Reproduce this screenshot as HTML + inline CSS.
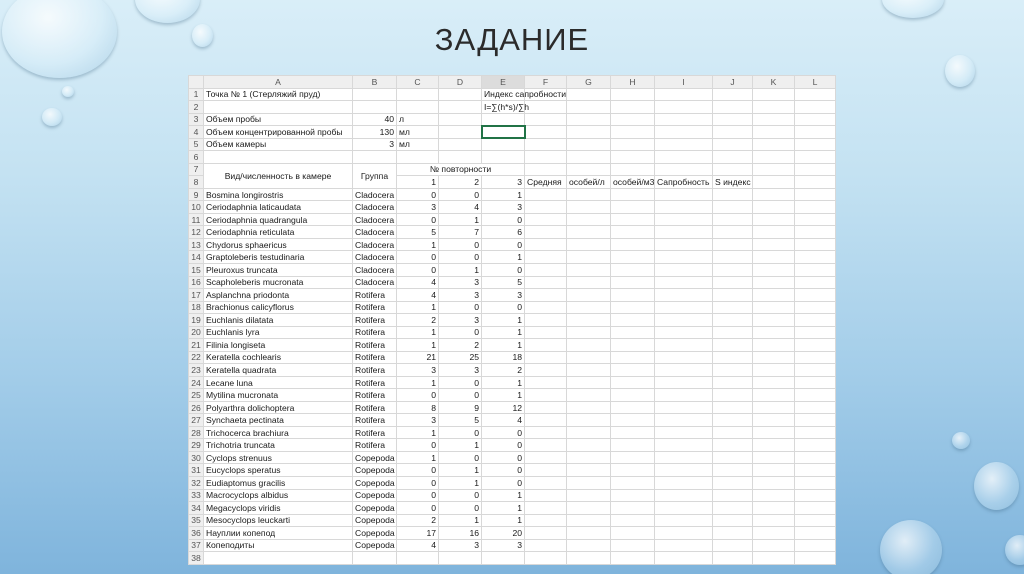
<!DOCTYPE html>
<html><head><meta charset="utf-8"><style>
html,body{margin:0;padding:0;width:1024px;height:574px;overflow:hidden}
html{background:#7fb4dc}
body{position:relative;background:linear-gradient(180deg,#d9eef8 0%,#c4e2f2 30%,#a3cde9 65%,#7fb4dc 100%);font-family:"Liberation Sans",sans-serif}
.drop{position:absolute;border-radius:50%;background:radial-gradient(ellipse at 40% 35%,rgba(255,255,255,.75),rgba(220,240,250,.35) 55%,rgba(160,200,225,.5) 90%,rgba(255,255,255,.9) 100%);box-shadow:0 2px 3px rgba(60,100,130,.35)}
h1{position:absolute;left:0;width:1024px;top:22px;margin:0;text-align:center;font-weight:normal;font-size:31px;letter-spacing:1px;color:#2b2b2b}
table{position:absolute;left:188px;top:75px;width:647px;height:490px;border-collapse:collapse;table-layout:fixed;background:#fff;font-family:"Liberation Sans","Noto Sans CJK SC",sans-serif;font-size:8.6px;color:#1a1a1a}
td{border:1px solid #d8d8d8;padding:0 2px;white-space:nowrap;overflow:visible;line-height:10px}
tr.h td{background:#efefef;text-align:center;color:#555}
td.n{background:#efefef;text-align:center;color:#555;padding:0}
.r{text-align:right}.c{text-align:center}
</style></head><body>
<div class="drop" style="left:2px;top:-15px;width:115px;height:93px"></div>
<div class="drop" style="left:135px;top:-25px;width:65px;height:48px"></div>
<div class="drop" style="left:192px;top:24px;width:21px;height:23px"></div>
<div class="drop" style="left:62px;top:86px;width:12px;height:11px"></div>
<div class="drop" style="left:42px;top:108px;width:20px;height:18px"></div>
<div class="drop" style="left:882px;top:-20px;width:62px;height:38px"></div>
<div class="drop" style="left:945px;top:55px;width:30px;height:32px"></div>
<div class="drop" style="left:952px;top:432px;width:18px;height:17px"></div>
<div class="drop" style="left:974px;top:462px;width:45px;height:48px"></div>
<div class="drop" style="left:880px;top:520px;width:62px;height:60px"></div>
<div class="drop" style="left:1005px;top:535px;width:30px;height:30px"></div>
<h1>ЗАДАНИЕ</h1>
<table>
<colgroup><col style="width:15px"><col style="width:149px"><col style="width:44px"><col style="width:42px"><col style="width:43px"><col style="width:43px"><col style="width:42px"><col style="width:44px"><col style="width:44px"><col style="width:58px"><col style="width:40px"><col style="width:42px"><col style="width:41px"></colgroup>
<tr class="h"><td></td><td>A</td><td>B</td><td>C</td><td>D</td><td style="background:#dcdcdc">E</td><td>F</td><td>G</td><td>H</td><td>I</td><td>J</td><td>K</td><td>L</td></tr>
<tr><td class="n">1</td><td>Точка № 1 (Стерляжий пруд)</td><td></td><td></td><td></td><td>Индекс сапробности</td><td></td><td></td><td></td><td></td><td></td><td></td><td></td></tr>
<tr><td class="n">2</td><td></td><td></td><td></td><td></td><td>I=∑(h*s)/∑h</td><td></td><td></td><td></td><td></td><td></td><td></td><td></td></tr>
<tr><td class="n">3</td><td>Объем пробы</td><td class="r">40</td><td>л</td><td></td><td></td><td></td><td></td><td></td><td></td><td></td><td></td><td></td></tr>
<tr><td class="n">4</td><td>Объем концентрированной пробы</td><td class="r">130</td><td>мл</td><td></td><td style="border:2px solid #217346"></td><td></td><td></td><td></td><td></td><td></td><td></td><td></td></tr>
<tr><td class="n">5</td><td>Объем камеры</td><td class="r">3</td><td>мл</td><td></td><td></td><td></td><td></td><td></td><td></td><td></td><td></td><td></td></tr>
<tr><td class="n">6</td><td></td><td></td><td></td><td></td><td></td><td></td><td></td><td></td><td></td><td></td><td></td><td></td></tr>
<tr><td class="n">7</td><td rowspan="2" class="c">Вид/численность в камере</td><td rowspan="2" class="c">Группа</td><td colspan="3" class="c">№ повторности</td><td></td><td></td><td></td><td></td><td></td><td></td><td></td></tr>
<tr><td class="n">8</td><td class="r">1</td><td class="r">2</td><td class="r">3</td><td>Средняя</td><td>особей/л</td><td>особей/м3</td><td>Сапробность</td><td>S индекс</td><td></td><td></td></tr>
<tr><td class="n">9</td><td>Bosmina longirostris</td><td>Cladocera</td><td class="r">0</td><td class="r">0</td><td class="r">1</td><td></td><td></td><td></td><td></td><td></td><td></td><td></td></tr>
<tr><td class="n">10</td><td>Ceriodaphnia laticaudata</td><td>Cladocera</td><td class="r">3</td><td class="r">4</td><td class="r">3</td><td></td><td></td><td></td><td></td><td></td><td></td><td></td></tr>
<tr><td class="n">11</td><td>Ceriodaphnia quadrangula</td><td>Cladocera</td><td class="r">0</td><td class="r">1</td><td class="r">0</td><td></td><td></td><td></td><td></td><td></td><td></td><td></td></tr>
<tr><td class="n">12</td><td>Ceriodaphnia reticulata</td><td>Cladocera</td><td class="r">5</td><td class="r">7</td><td class="r">6</td><td></td><td></td><td></td><td></td><td></td><td></td><td></td></tr>
<tr><td class="n">13</td><td>Chydorus sphaericus</td><td>Cladocera</td><td class="r">1</td><td class="r">0</td><td class="r">0</td><td></td><td></td><td></td><td></td><td></td><td></td><td></td></tr>
<tr><td class="n">14</td><td>Graptoleberis testudinaria</td><td>Cladocera</td><td class="r">0</td><td class="r">0</td><td class="r">1</td><td></td><td></td><td></td><td></td><td></td><td></td><td></td></tr>
<tr><td class="n">15</td><td>Pleuroxus truncata</td><td>Cladocera</td><td class="r">0</td><td class="r">1</td><td class="r">0</td><td></td><td></td><td></td><td></td><td></td><td></td><td></td></tr>
<tr><td class="n">16</td><td>Scapholeberis mucronata</td><td>Cladocera</td><td class="r">4</td><td class="r">3</td><td class="r">5</td><td></td><td></td><td></td><td></td><td></td><td></td><td></td></tr>
<tr><td class="n">17</td><td>Asplanchna priodonta</td><td>Rotifera</td><td class="r">4</td><td class="r">3</td><td class="r">3</td><td></td><td></td><td></td><td></td><td></td><td></td><td></td></tr>
<tr><td class="n">18</td><td>Brachionus calicyflorus</td><td>Rotifera</td><td class="r">1</td><td class="r">0</td><td class="r">0</td><td></td><td></td><td></td><td></td><td></td><td></td><td></td></tr>
<tr><td class="n">19</td><td>Euchlanis dilatata</td><td>Rotifera</td><td class="r">2</td><td class="r">3</td><td class="r">1</td><td></td><td></td><td></td><td></td><td></td><td></td><td></td></tr>
<tr><td class="n">20</td><td>Euchlanis lyra</td><td>Rotifera</td><td class="r">1</td><td class="r">0</td><td class="r">1</td><td></td><td></td><td></td><td></td><td></td><td></td><td></td></tr>
<tr><td class="n">21</td><td>Filinia longiseta</td><td>Rotifera</td><td class="r">1</td><td class="r">2</td><td class="r">1</td><td></td><td></td><td></td><td></td><td></td><td></td><td></td></tr>
<tr><td class="n">22</td><td>Keratella cochlearis</td><td>Rotifera</td><td class="r">21</td><td class="r">25</td><td class="r">18</td><td></td><td></td><td></td><td></td><td></td><td></td><td></td></tr>
<tr><td class="n">23</td><td>Keratella quadrata</td><td>Rotifera</td><td class="r">3</td><td class="r">3</td><td class="r">2</td><td></td><td></td><td></td><td></td><td></td><td></td><td></td></tr>
<tr><td class="n">24</td><td>Lecane luna</td><td>Rotifera</td><td class="r">1</td><td class="r">0</td><td class="r">1</td><td></td><td></td><td></td><td></td><td></td><td></td><td></td></tr>
<tr><td class="n">25</td><td>Mytilina mucronata</td><td>Rotifera</td><td class="r">0</td><td class="r">0</td><td class="r">1</td><td></td><td></td><td></td><td></td><td></td><td></td><td></td></tr>
<tr><td class="n">26</td><td>Polyarthra dolichoptera</td><td>Rotifera</td><td class="r">8</td><td class="r">9</td><td class="r">12</td><td></td><td></td><td></td><td></td><td></td><td></td><td></td></tr>
<tr><td class="n">27</td><td>Synchaeta pectinata</td><td>Rotifera</td><td class="r">3</td><td class="r">5</td><td class="r">4</td><td></td><td></td><td></td><td></td><td></td><td></td><td></td></tr>
<tr><td class="n">28</td><td>Trichocerca brachiura</td><td>Rotifera</td><td class="r">1</td><td class="r">0</td><td class="r">0</td><td></td><td></td><td></td><td></td><td></td><td></td><td></td></tr>
<tr><td class="n">29</td><td>Trichotria truncata</td><td>Rotifera</td><td class="r">0</td><td class="r">1</td><td class="r">0</td><td></td><td></td><td></td><td></td><td></td><td></td><td></td></tr>
<tr><td class="n">30</td><td>Cyclops strenuus</td><td>Copepoda</td><td class="r">1</td><td class="r">0</td><td class="r">0</td><td></td><td></td><td></td><td></td><td></td><td></td><td></td></tr>
<tr><td class="n">31</td><td>Eucyclops speratus</td><td>Copepoda</td><td class="r">0</td><td class="r">1</td><td class="r">0</td><td></td><td></td><td></td><td></td><td></td><td></td><td></td></tr>
<tr><td class="n">32</td><td>Eudiaptomus gracilis</td><td>Copepoda</td><td class="r">0</td><td class="r">1</td><td class="r">0</td><td></td><td></td><td></td><td></td><td></td><td></td><td></td></tr>
<tr><td class="n">33</td><td>Macrocyclops albidus</td><td>Copepoda</td><td class="r">0</td><td class="r">0</td><td class="r">1</td><td></td><td></td><td></td><td></td><td></td><td></td><td></td></tr>
<tr><td class="n">34</td><td>Megacyclops viridis</td><td>Copepoda</td><td class="r">0</td><td class="r">0</td><td class="r">1</td><td></td><td></td><td></td><td></td><td></td><td></td><td></td></tr>
<tr><td class="n">35</td><td>Mesocyclops leuckarti</td><td>Copepoda</td><td class="r">2</td><td class="r">1</td><td class="r">1</td><td></td><td></td><td></td><td></td><td></td><td></td><td></td></tr>
<tr><td class="n">36</td><td>Науплии копепод</td><td>Copepoda</td><td class="r">17</td><td class="r">16</td><td class="r">20</td><td></td><td></td><td></td><td></td><td></td><td></td><td></td></tr>
<tr><td class="n">37</td><td>Копеподиты</td><td>Copepoda</td><td class="r">4</td><td class="r">3</td><td class="r">3</td><td></td><td></td><td></td><td></td><td></td><td></td><td></td></tr>
<tr><td class="n">38</td><td></td><td></td><td></td><td></td><td></td><td></td><td></td><td></td><td></td><td></td><td></td><td></td></tr>
</table>
</body></html>
